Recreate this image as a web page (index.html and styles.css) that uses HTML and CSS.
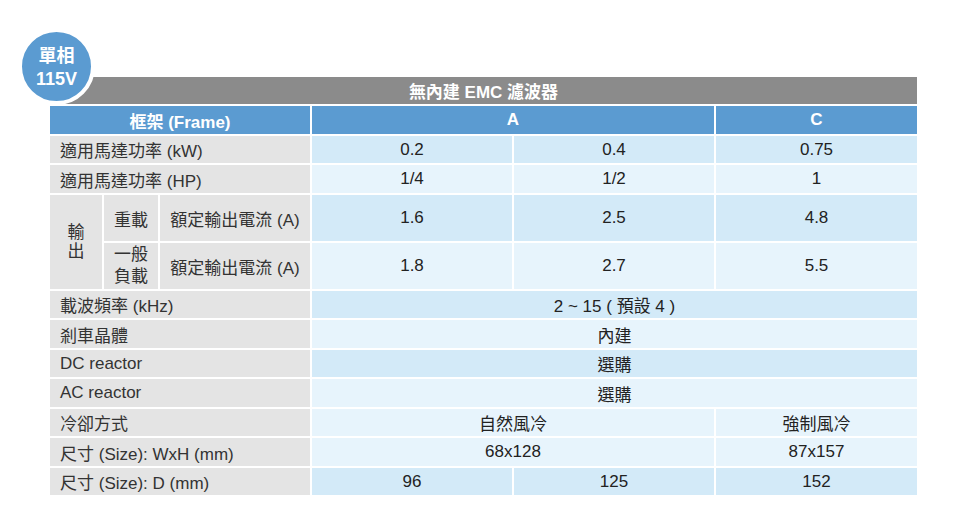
FILE: index.html
```html
<!DOCTYPE html>
<html lang="zh-Hant">
<head>
<meta charset="utf-8">
<title>單相 115V</title>
<link rel="stylesheet" href="styles.css">
</head>
<body>
<div class="page">
  <div class="badge"><span>單相</span><span>115V</span></div>
  <div class="spec">
    <div class="title">無內建 EMC 濾波器</div>
    <div class="grid">
      <div class="hd c-lab">框架 (Frame)</div>
      <div class="hd c-a">A</div>
      <div class="hd c-c">C</div>

      <div class="lab c-lab">適用馬達功率 (kW)</div>
      <div class="val dk">0.2</div>
      <div class="val dk">0.4</div>
      <div class="val dk">0.75</div>

      <div class="lab c-lab">適用馬達功率 (HP)</div>
      <div class="val lt">1/4</div>
      <div class="val lt">1/2</div>
      <div class="val lt">1</div>

      <div class="lab ctr out">輸<br>出</div>
      <div class="lab ctr">重載</div>
      <div class="lab ctr">額定輸出電流 (A)</div>
      <div class="val dk">1.6</div>
      <div class="val dk">2.5</div>
      <div class="val dk">4.8</div>

      <div class="lab ctr two">一般<br>負載</div>
      <div class="lab ctr">額定輸出電流 (A)</div>
      <div class="val lt">1.8</div>
      <div class="val lt">2.7</div>
      <div class="val lt">5.5</div>

      <div class="lab c-lab">載波頻率 (kHz)</div>
      <div class="val dk c-all">2 ~ 15 ( 預設 4 )</div>

      <div class="lab c-lab">剎車晶體</div>
      <div class="val lt c-all">內建</div>

      <div class="lab c-lab">DC reactor</div>
      <div class="val dk c-all">選購</div>

      <div class="lab c-lab">AC reactor</div>
      <div class="val lt c-all">選購</div>

      <div class="lab c-lab">冷卻方式</div>
      <div class="val lt c-a">自然風冷</div>
      <div class="val lt c-c">強制風冷</div>

      <div class="lab c-lab">尺寸 (Size): WxH (mm)</div>
      <div class="val lt c-a">68x128</div>
      <div class="val lt c-c">87x157</div>

      <div class="lab c-lab">尺寸 (Size): D (mm)</div>
      <div class="val dk">96</div>
      <div class="val dk">125</div>
      <div class="val dk">152</div>
    </div>
  </div>
</div>
</body>
</html>
```

FILE: styles.css
```css
* { box-sizing: border-box; }
html, body { margin: 0; padding: 0; background: #ffffff; }
body {
  font-family: "Liberation Sans", Arial, "Noto Sans CJK TC", sans-serif;
  font-size: 17px;
  color: #222222;
}
.page {
  position: relative;
  width: 960px;
  height: 512px;
  padding: 77px 0 0 50px;
}
.badge {
  position: absolute;
  left: 18px;
  top: 28px;
  width: 77px;
  height: 77px;
  border-radius: 50%;
  background: #5b9bd1;
  border: 4px solid #ffffff;
  color: #ffffff;
  font-weight: bold;
  font-size: 18px;
  line-height: 23px;
  display: flex;
  flex-direction: column;
  align-items: center;
  justify-content: center;
  z-index: 2;
  padding-top: 2px;
}
.spec {
  width: 867px;
  display: flex;
  flex-direction: column;
  gap: 2px;
}
.title {
  height: 27px;
  background: #8b8b8b;
  color: #ffffff;
  font-weight: bold;
  font-size: 17px;
  display: flex;
  align-items: center;
  justify-content: center;
}
.grid {
  display: grid;
  grid-template-columns: 52px 54px 150px 200px 200px 201px;
  grid-template-rows: 27.5px 27.5px 27.5px 46px 46px 27.5px 27.5px 27.5px 27.5px 27.5px 27.5px 27.5px;
  gap: 2px;
}
.grid > div {
  display: flex;
  align-items: center;
  justify-content: center;
  text-align: center;
  white-space: nowrap;
  padding-top: 1px;
}
.hd {
  background: #5b9bd1;
  color: #ffffff;
  font-weight: bold;
}
.c-lab { grid-column: 1 / 4; }
.c-a { grid-column: 4 / 6; }
.c-c { grid-column: 6 / 7; }
.c-all { grid-column: 4 / 7; }
.lab {
  background: #e4e4e4;
  color: #333333;
}
.grid > .lab.c-lab {
  justify-content: flex-start;
  padding-left: 10px;
}
.out {
  grid-column: 1 / 2;
  grid-row: 4 / 6;
  line-height: 19px;
}
.two { line-height: 22px; }
.dk { background: #d3eaf8; }
.lt { background: #e7f4fc; }
```
